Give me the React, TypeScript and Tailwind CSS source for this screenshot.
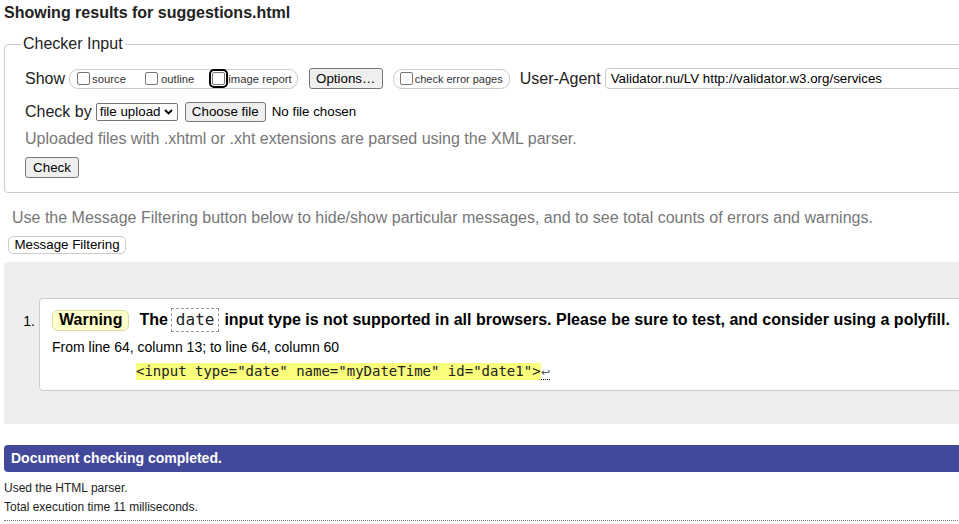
import React from "react";

const Check = ({ focus = false }: { focus?: boolean }) => (
  <span
    className={
      "inline-block w-[13px] h-[13px] shrink-0 rounded-[2px] border border-[#767676] bg-white " +
      (focus ? "outline-2 outline-black outline-offset-[1px]" : "")
    }
  />
);

const Btn = ({ children, cls }: { children: React.ReactNode; cls: string }) => (
  <span
    className={
      "inline-flex items-center justify-center rounded-[3px] border border-[#767676] bg-[#efefef] text-[13.33px] text-black " +
      cls
    }
  >
    {children}
  </span>
);

export default function App() {
  return (
    <div className="w-[959px] h-[524px] overflow-hidden bg-white font-['Liberation_Sans',Arial,sans-serif] text-[#222]">
      <div className="w-[1100px] pl-[4px]">
        <h2 className="mt-[3px] text-[16px] font-bold leading-[20px] text-[#222]">
          Showing results for suggestions.html
        </h2>

        <fieldset className="mt-[12px] rounded-[4px] border border-[#cccccc] pl-[20px] pt-[15px] pb-[14px]">
          <legend className="ml-[-4px] px-[2px] text-[16px] leading-[18px] text-[#222]">Checker Input</legend>

          {/* Row 1 */}
          <div className="flex h-[21px] items-center">
            <span className="text-[16px] leading-[18px]">Show</span>
            <span className="ml-[4px] flex h-[20px] items-center rounded-[9px] border border-[#cccccc] pl-[7px] pr-[5px] text-[11.3px] text-[#333]">
              <Check />
              <span className="ml-[2px] mt-[2px]">source</span>
              <span className="ml-[19px] flex">
                <Check />
              </span>
              <span className="ml-[3px] mt-[2px]">outline</span>
              <span className="ml-[18px] flex">
                <Check focus />
              </span>
              <span className="ml-[3px] mt-[2px]">image report</span>
            </span>
            <Btn cls="ml-[11px] h-[21px] w-[74px]">Options…</Btn>
            <span className="ml-[10px] flex h-[20px] items-center rounded-[9px] border border-[#cccccc] pl-[6px] pr-[6px] text-[11px] text-[#333]">
              <Check />
              <span className="ml-[2px] mt-[2px]">check error pages</span>
            </span>
            <span className="ml-[10px] text-[16px] leading-[18px]">User-Agent</span>
            <span className="ml-[4px] flex h-[21px] flex-1 items-center rounded-[4px] border border-[#cccccc] pl-[5px] text-[13.33px] text-black">
              Validator.nu/LV http://validator.w3.org/services
            </span>
          </div>

          {/* Row 2 */}
          <div className="mt-[13px] flex h-[20px] items-center">
            <span className="text-[16px] leading-[18px]">Check by</span>
            <span className="ml-[4px] flex h-[18px] w-[82px] items-center justify-between rounded-[2px] border border-[#767676] bg-white pl-[3px] pr-[4px] text-[13.33px] text-black">
              <span>file upload</span>
              <svg width="9" height="6" viewBox="0 0 9 6">
                <polyline points="1,1 4.5,4.5 8,1" fill="none" stroke="#000" strokeWidth="1.8" />
              </svg>
            </span>
            <Btn cls="ml-[7px] h-[20px] w-[81px]">Choose file</Btn>
            <span className="ml-[6px] text-[13.33px] text-black">No file chosen</span>
          </div>

          {/* Row 3 */}
          <p className="mt-[8px] text-[16px] leading-[18px] text-[#777777]">
            Uploaded files with .xhtml or .xht extensions are parsed using the XML parser.
          </p>

          <div className="mt-[9px] flex">
            <Btn cls="h-[21px] w-[54px]">Check</Btn>
          </div>
        </fieldset>

        <p className="mt-[16px] pl-[8px] text-[16px] leading-[18px] text-[#777777]">
          Use the Message Filtering button below to hide/show particular messages, and to see total counts of errors and warnings.
        </p>
        <div className="mt-[9px] flex pl-[4px]">
          <span className="flex h-[18px] w-[118px] items-center justify-center rounded-[5px] border border-[#cccccc] bg-white text-[13.33px] text-black">
            Message Filtering
          </span>
        </div>

        {/* Results region */}
        <div className="mt-[8px] h-[162px] rounded-tl-[4px] bg-[#eeeeee] pt-[36px]">
          <ol className="flex">
            <span className="w-[35px] shrink-0 pt-[11px] pr-[4px] text-right text-[14px] leading-[24px] text-black">1.</span>
            <li className="h-[93px] flex-1 rounded-[4px] border border-[#cccccc] bg-white pl-[12px] pt-[9px]">
              <div className="flex h-[24px] items-center text-[16px] font-bold text-black">
                <span className="flex h-[21px] items-center rounded-[6px] border border-[#dadaa8] bg-[#ffffcc] px-[6px]">
                  Warning
                </span>
                <span className="ml-[10px]">The</span>
                <code className="ml-[3px] flex h-[24px] items-center border border-dashed border-[#999999] px-[4px] font-['DejaVu_Sans_Mono',monospace] text-[16px] font-normal text-[#222]">
                  date
                </code>
                <span className="ml-[5px] whitespace-nowrap">
                  input type is not supported in all browsers. Please be sure to test, and consider using a polyfill.
                </span>
              </div>
              <p className="mt-[7px] h-[17px] text-[14px] leading-[17px] text-black">
                From line 64, column 13; to line 64, column 60
              </p>
              <p className="mt-[7px] flex h-[17px] items-end pl-[84px]">
                <span className="whitespace-pre bg-[#f9fd7c] font-['DejaVu_Sans_Mono',monospace] text-[14px] leading-[17px] text-[#222]">
                  {'<input type="date" name="myDateTime" id="date1">'}
                </span>
                <span className="border-b border-dotted border-black text-[11px] leading-[13px] text-[#555]">↩</span>
              </p>
            </li>
          </ol>
        </div>

        <div className="mt-[21px] flex h-[27px] items-center rounded-l-[4px] bg-[#43499a] pl-[7px] text-[14px] font-bold text-white">
          Document checking completed.
        </div>
        <p className="mt-[7px] text-[12px] leading-[19px] text-[#222]">Used the HTML parser.</p>
        <p className="text-[12px] leading-[19px] text-[#222]">Total execution time 11 milliseconds.</p>
        <div className="mt-[3px] border-t border-dotted border-[#777777]" />
      </div>
    </div>
  );
}
